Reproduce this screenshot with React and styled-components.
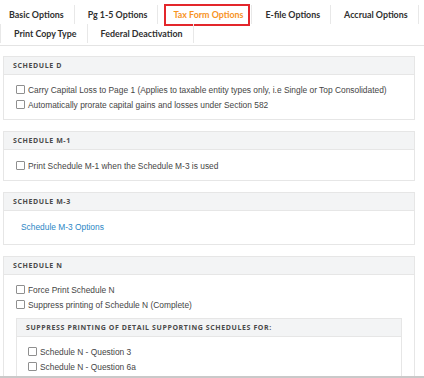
import React from 'react';
import styled, { createGlobalStyle } from 'styled-components';

/* ~~~~~~ Styles ~~~~~~~ */

const GlobalStyle = createGlobalStyle`
  html, body {
    margin: 0;
    padding: 0;
    background: #fff;
  }
  * {
    box-sizing: border-box;
  }
`;

const Frame = styled.div`
  height: 378px;
  overflow: hidden;
  border-bottom: 2px solid #c9c9c9;
  font-family: "Liberation Sans", Arial, sans-serif;
`;

const TabList = styled.div`
  display: flex;
  flex-wrap: wrap;
  padding: 5px 0 2px;
  border-bottom: 1px solid #e4e4e4;
`;

const Tab = styled.div`
  height: 19px;
  line-height: 19px;
  padding: ${(p) => (p.$active ? '0 3px 0 8px' : `0 10px 0 ${p.$first ? 9 : 13}px`)};
  border-right: 1px solid #e8e8e8;
  border-left: ${(p) => (p.$lead ? '1px solid #e8e8e8' : 'none')};
  font-family: Lato, "Open Sans", sans-serif;
  font-weight: 700;
  font-size: 8.9px;
  color: ${(p) => (p.$active ? '#f7931e' : '#2f2f2f')};
  cursor: pointer;
  white-space: nowrap;
`;

const ActiveBox = styled.span`
  display: inline-block;
  line-height: 18px;
  padding: 0 5px 0 7px;
  outline: 2px solid #e3262b;
  outline-offset: 0;
`;

const Content = styled.div`
  padding: 10px 9px 0 3px;
  display: flex;
  flex-direction: column;
  gap: 11px;
`;

const Panel = styled.section`
  border: 1px solid #e6e6e6;
  background: #fff;
  margin: ${(p) => (p.$nested ? '6px 0 0' : '0')};
`;

const PanelHeader = styled.div`
  height: 18px;
  line-height: 18px;
  padding-left: 9px;
  background: #f3f4f5;
  border-bottom: 1px solid #e6e6e6;
  font-family: "Open Sans", sans-serif;
  font-weight: 700;
  font-size: 7px;
  letter-spacing: 0.6px;
  color: #4a4a4a;
  text-transform: uppercase;
`;

const PanelBody = styled.div`
  padding: ${(p) => p.$pad || '7px 12px 7px 12px'};
`;

const CheckRow = styled.label`
  display: flex;
  align-items: center;
  gap: 3px;
  height: 15px;
  font-size: 8.4px;
  color: #454545;
`;

const Box = styled.span`
  width: 9px;
  height: 9px;
  border: 1px solid #8f8f8f;
  border-radius: 1px;
  background: #fff;
  flex: none;
`;

const OptionLink = styled.a`
  display: block;
  padding: 11px 0 12px 5px;
  font-size: 8.4px;
  color: #2b86c5;
  text-decoration: none;
`;

/* ~~~~~~ Components ~~~~~~~ */

const tabs = [
  { label: 'Basic Options', first: true },
  { label: 'Pg 1-5 Options' },
  { label: 'Tax Form Options', active: true },
  { label: 'E-file Options' },
  { label: 'Accrual Options' },
  { label: 'Print Copy Type', lead: true },
  { label: 'Federal Deactivation' }
];

const Check = ({ children }) => (
  <CheckRow>
    <Box />
    {children}
  </CheckRow>
);

const App = () => (
  <Frame>
    <GlobalStyle />
    <TabList>
      {tabs.map((t) => (
        <Tab key={t.label} $active={t.active} $first={t.first} $lead={t.lead}>
          {t.active ? <ActiveBox>{t.label}</ActiveBox> : t.label}
        </Tab>
      ))}
    </TabList>
    <Content>
      <Panel>
        <PanelHeader>Schedule D</PanelHeader>
        <PanelBody>
          <Check>Carry Capital Loss to Page 1 (Applies to taxable entity types only, i.e Single or Top Consolidated)</Check>
          <Check>Automatically prorate capital gains and losses under Section 582</Check>
        </PanelBody>
      </Panel>
      <Panel>
        <PanelHeader>Schedule M-1</PanelHeader>
        <PanelBody $pad="8px 12px 7px 12px">
          <Check>Print Schedule M-1 when the Schedule M-3 is used</Check>
        </PanelBody>
      </Panel>
      <Panel>
        <PanelHeader>Schedule M-3</PanelHeader>
        <PanelBody $pad="0 12px">
          <OptionLink href="#">Schedule M-3 Options</OptionLink>
        </PanelBody>
      </Panel>
      <Panel>
        <PanelHeader>Schedule N</PanelHeader>
        <PanelBody>
          <Check>Force Print Schedule N</Check>
          <Check>Suppress printing of Schedule N (Complete)</Check>
          <Panel $nested>
            <PanelHeader>Suppress printing of detail supporting schedules for:</PanelHeader>
            <PanelBody $pad="7px 11px">
              <Check>Schedule N - Question 3</Check>
              <Check>Schedule N - Question 6a</Check>
            </PanelBody>
          </Panel>
        </PanelBody>
      </Panel>
    </Content>
  </Frame>
);

export default App;
